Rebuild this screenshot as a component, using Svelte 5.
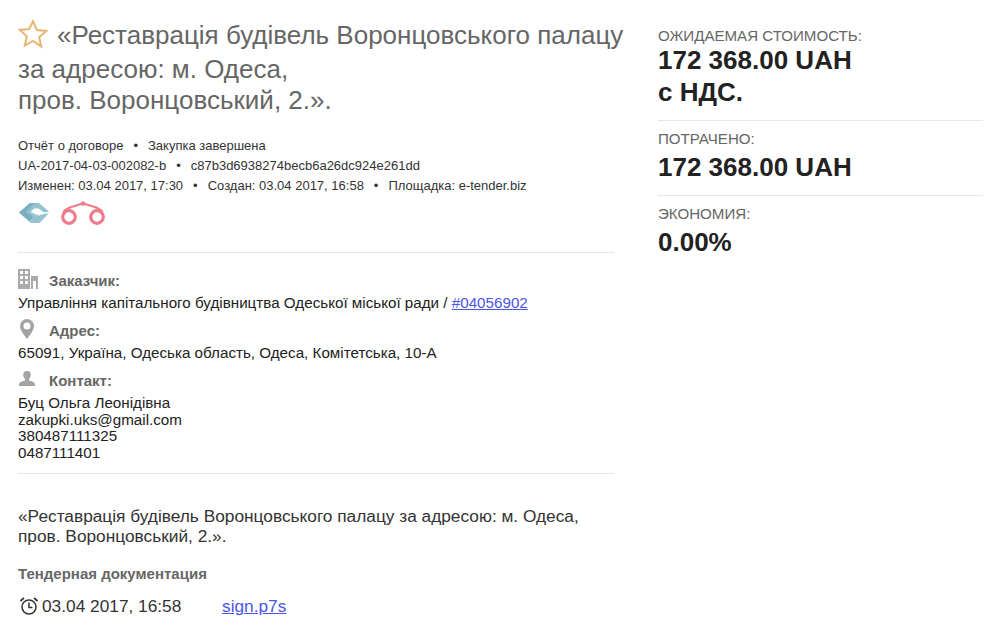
<script>
  const docs = [{ date: '03.04 2017, 16:58', name: 'sign.p7s' }];
</script>

<div class="page">
  <main class="left">
    <h1 class="title">
      <svg class="star" viewBox="0 0 32 32" aria-hidden="true"><path d="M16 2.500l4.100 9.200 10 1-7.500 6.700 2.100 9.900L16 23.300 7.300 28.300l2.100-9.900L1.900 11.700l10-1z" fill="none" stroke="#e6b873" stroke-width="2.200" stroke-linejoin="miter"/></svg>
      <span class="t1">«Реставрація будівель Воронцовського палацу</span>
      <span class="tl">за адресою: м. Одеса,</span>
      <span class="tl">пров. Воронцовський, 2.».</span>
    </h1>

    <div class="meta">
      <div>Отчёт о договоре<i>•</i>Закупка завершена</div>
      <div>UA-2017-04-03-002082-b<i>•</i>c87b3d6938274becb6a26dc924e261dd</div>
      <div>Изменен: 03.04 2017, 17:30<i>•</i>Создан: 03.04 2017, 16:58<i>•</i>Площадка: e-tender.biz</div>
    </div>

    <div class="badges">
      <svg width="32" height="22" viewBox="0 0 32 22" aria-hidden="true">
        <defs>
          <pattern id="hatch" width="2" height="2" patternUnits="userSpaceOnUse" patternTransform="rotate(45)">
            <rect width="2" height="2" fill="#7db4c5" />
            <rect width="0.700" height="2" fill="#c4e0e8" />
          </pattern>
        </defs>
        <path d="M1 10.500L12 1h9l10 8.500-5 1-5.500-4H16l-3.500 3.500 8 3.500L26 12l5-1-9.500 10h-8.500z" fill="url(#hatch)"/>
        <path d="M1 10.500L12 1h5l-9 8.500 7 5-3.500 5z" fill="#78b0c2"/>
      </svg>
      <svg width="46" height="24" viewBox="0 0 46 24" aria-hidden="true" fill="none" stroke="#ee7c8c">
        <circle cx="9" cy="16" r="6.300" stroke-width="3.200"/>
        <circle cx="37" cy="16" r="6.300" stroke-width="3.200"/>
        <path d="M3.500 11C6 7.500 9 6.500 13 5.500L23 2.500l10 3c4 1 7 2 9.500 5.500" stroke-width="2.200"/>
        <circle cx="23" cy="2.500" r="2.200" fill="#ee7c8c" stroke="none"/>
      </svg>
    </div>

    <hr />

    <section class="info">
      <div class="head">
        <svg class="ico" viewBox="0 0 20 20" aria-hidden="true" fill="#ababab">
          <path fill-rule="evenodd" d="M0 0h12v20H0zM2 2v3h3V2zm5 0v3h3V2zM2 7v3h3V7zm5 0v3h3V7zM2 12v3h3v-3zm5 0v3h3v-3z"/>
          <path fill-rule="evenodd" d="M13 7h7v13h-2v-8h-3v8h-2z"/>
        </svg>
        <b>Заказчик:</b>
      </div>
      <div class="val">Управління капітального будівництва Одеської міської ради / <a href="#top">#04056902</a></div>
    </section>

    <section class="info">
      <div class="head">
        <svg class="ico" viewBox="0 0 20 20" aria-hidden="true">
          <path fill-rule="evenodd" fill="#a3a3a3" d="M9 0a7 7 0 0 1 7 7c0 4-4 9-7 13-3-4-7-9-7-13a7 7 0 0 1 7-7zm0 3.500a3.500 3.500 0 1 0 0 7 3.500 3.500 0 0 0 0-7z"/>
        </svg>
        <b>Адрес:</b>
      </div>
      <div class="val">65091, Україна, Одеська область, Одеса, Комітетська, 10-А</div>
    </section>

    <section class="info">
      <div class="head">
        <svg class="ico" viewBox="0 0 20 20" aria-hidden="true" fill="#a3a3a3">
          <path d="M9 2c2.500 0 3.800 1.600 3.800 3.800S11.500 9.500 11 10v1.500c3 .8 6 1.700 6 4V17H1v-1.500c0-2.300 3-3.200 6-4V10C6.500 9.500 5.200 8 5.200 5.800S6.500 2 9 2z"/>
        </svg>
        <b>Контакт:</b>
      </div>
      <div class="val tight">
        <div>Буц Ольга Леонідівна</div>
        <div>zakupki.uks@gmail.com</div>
        <div>380487111325</div>
        <div>0487111401</div>
      </div>
    </section>

    <hr class="second" />

    <p class="desc">«Реставрація будівель Воронцовського палацу за адресою: м. Одеса,<br />пров. Воронцовський, 2.».</p>

    <h2 class="docs">Тендерная документация</h2>

    {#each docs as d}
      <div class="doc">
        <svg class="clock" viewBox="0 0 20 20" aria-hidden="true" fill="none" stroke="#333" stroke-width="1.500">
          <circle cx="10" cy="11" r="7" />
          <path d="M10 6.500V11.500h3.500" />
          <path d="M1.500 5L5 1.800M18.500 5L15 1.800" stroke-width="1.800" />
        </svg>
        <span class="date">{d.date}</span>
        <a href="#top">{d.name}</a>
      </div>
    {/each}
  </main>

  <aside class="right">
    <div class="stat">
      <div class="label">ОЖИДАЕМАЯ СТОИМОСТЬ:</div>
      <div class="amount first">172 368.00 UAH<br />с НДС.</div>
    </div>
    <div class="stat">
      <div class="label">ПОТРАЧЕНО:</div>
      <div class="amount">172 368.00 UAH</div>
    </div>
    <div class="stat">
      <div class="label">ЭКОНОМИЯ:</div>
      <div class="amount">0.00%</div>
    </div>
  </aside>
</div>

<style>
  :global(body) {
    margin: 0;
    background: #fff;
  }
  .page {
    display: flex;
    width: 1000px;
    height: 634px;
    overflow: hidden;
    font-family: "Liberation Sans", Arial, sans-serif;
    color: #222;
    box-sizing: border-box;
    padding-left: 18px;
  }
  .left {
    width: 596px;
    flex: none;
  }
  .right {
    width: 325px;
    margin-left: 44px;
    padding-top: 26px;
    flex: none;
  }
  .title {
    margin: 17px 0 0;
    font-size: 26px;
    font-weight: 400;
    color: #666;
    line-height: 31px;
    display: block;
    position: relative;
  }
  .star {
    width: 30px;
    height: 30px;
    position: absolute;
    left: 0;
    top: 2px;
  }
  .t1 {
    display: block;
    padding-left: 39px;
    white-space: nowrap;
    line-height: 37px;
  }
  .tl {
    display: block;
  }
  .meta {
    margin-top: 20px;
    font-size: 13px;
    line-height: 20px;
    color: #333;
  }
  .meta i {
    font-style: normal;
    margin: 0 10px;
  }
  .badges {
    display: flex;
    align-items: center;
    gap: 10px;
    height: 26px;
    margin-top: 4px;
  }
  hr {
    border: 0;
    border-top: 1px solid #e6e6e6;
    margin: 26px 0 15px;
  }
  hr.second {
    margin: 11px 0 0;
  }
  .info {
    margin-bottom: 5px;
  }
  .head {
    display: flex;
    align-items: center;
    height: 25px;
    font-size: 15px;
    color: #666;
  }
  .ico {
    width: 20px;
    height: 20px;
    margin-right: 11px;
    margin-bottom: 3px;
    flex: none;
  }
  .head b {
    font-weight: 700;
  }
  .val {
    font-size: 15.2px;
    line-height: 20px;
    color: #222;
  }
  .val.tight {
    line-height: 16.7px;
    margin-top: 2px;
  }
  a {
    color: #4a55e8;
    text-decoration: underline;
  }
  .desc {
    margin: 32px 0 0;
    font-size: 17.3px;
    line-height: 20px;
    color: #333;
  }
  .docs {
    margin: 18px 0 0;
    font-size: 15px;
    line-height: 20px;
    font-weight: 700;
    color: #666;
  }
  .doc {
    display: flex;
    align-items: center;
    margin-top: 12px;
    font-size: 17.3px;
    line-height: 20px;
  }
  .clock {
    width: 20px;
    height: 20px;
    margin-left: 1px;
    margin-right: 3px;
  }
  .date {
    color: #333;
    width: 180px;
  }
  .doc a {
    color: #4a55e8;
  }
  .stat {
    border-bottom: 1px solid #e6e6e6;
    padding-bottom: 12px;
    margin-bottom: 8px;
  }
  .stat:last-child {
    border: 0;
  }
  .label {
    font-size: 15.1px;
    line-height: 20px;
    color: #666;
  }
  .amount {
    margin-top: 2px;
    font-size: 26px;
    font-weight: 700;
    line-height: 32px;
    color: #222;
  }
  .amount.first {
    margin-top: -2px;
  }
</style>
